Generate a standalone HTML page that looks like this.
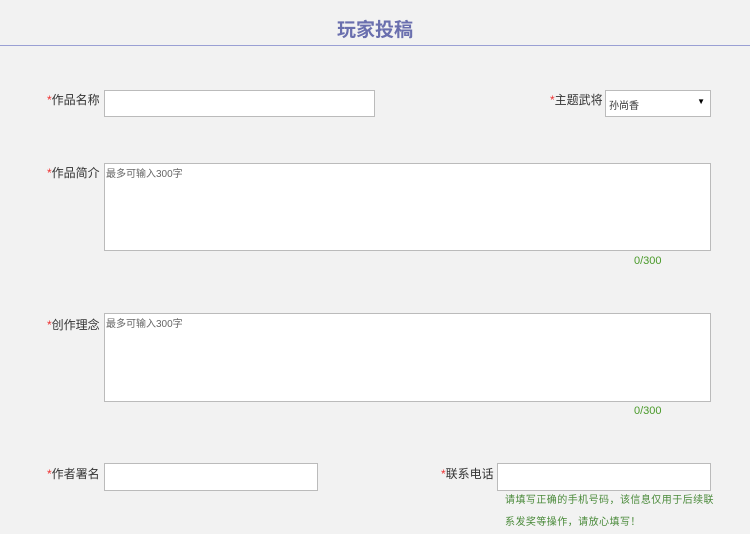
<!DOCTYPE html>
<html><head><meta charset="utf-8"><style>
*{margin:0;padding:0;box-sizing:border-box}
body{width:750px;height:534px;background:#f2f2f2;font-family:"Liberation Sans","Noto Sans CJK SC",sans-serif;position:relative;overflow:hidden;color:#333}
.t{position:absolute;left:0;width:750px;top:15px;text-align:center;font-size:19px;font-weight:bold;color:#6a6fae}
.line{position:absolute;left:0;top:45px;width:750px;height:1px;background:#9aa0d4}
.l{position:absolute;font-size:12px;color:#333;line-height:14px}
.l b{color:#e33;font-weight:normal}
.box{position:absolute;background:#fff;border:1px solid #bbb}
.ph{font-size:10px;color:#666;padding:1px 1px}
.c{position:absolute;font-size:11px;color:#4a9a2a}
.h{position:absolute;font-size:10px;color:#4a8a3a;line-height:22px;width:210px;letter-spacing:0.45px}
</style></head><body>
<div class="t">玩家投稿</div><div class="line"></div>

<div class="l" style="left:47px;top:93px"><b>*</b>作品名称</div>
<div class="box" style="left:104px;top:90px;width:271px;height:27px"></div>

<div class="l" style="left:550px;top:93px"><b>*</b>主题武将</div>
<div class="box" style="left:605px;top:90px;width:106px;height:27px;font-size:10px;padding:6px 3px">孙尚香<span style="position:absolute;right:5px;top:6px;font-size:8px;color:#000">▼</span></div>

<div class="l" style="left:47px;top:166px"><b>*</b>作品简介</div>
<div class="box ph" style="left:104px;top:163px;width:607px;height:88px">最多可输入300字</div>
<div class="c" style="left:634px;top:255px">0/300</div>

<div class="l" style="left:47px;top:318px"><b>*</b>创作理念</div>
<div class="box ph" style="left:104px;top:313px;width:607px;height:89px">最多可输入300字</div>
<div class="c" style="left:634px;top:405px">0/300</div>

<div class="l" style="left:47px;top:467px"><b>*</b>作者署名</div>
<div class="box" style="left:104px;top:463px;width:214px;height:28px"></div>

<div class="l" style="left:441px;top:467px"><b>*</b>联系电话</div>
<div class="box" style="left:497px;top:463px;width:214px;height:28px"></div>
<div class="h" style="left:505px;top:490px">请填写正确的手机号码，该信息仅用于后续联系发奖等操作，请放心填写！</div>
</body></html>
